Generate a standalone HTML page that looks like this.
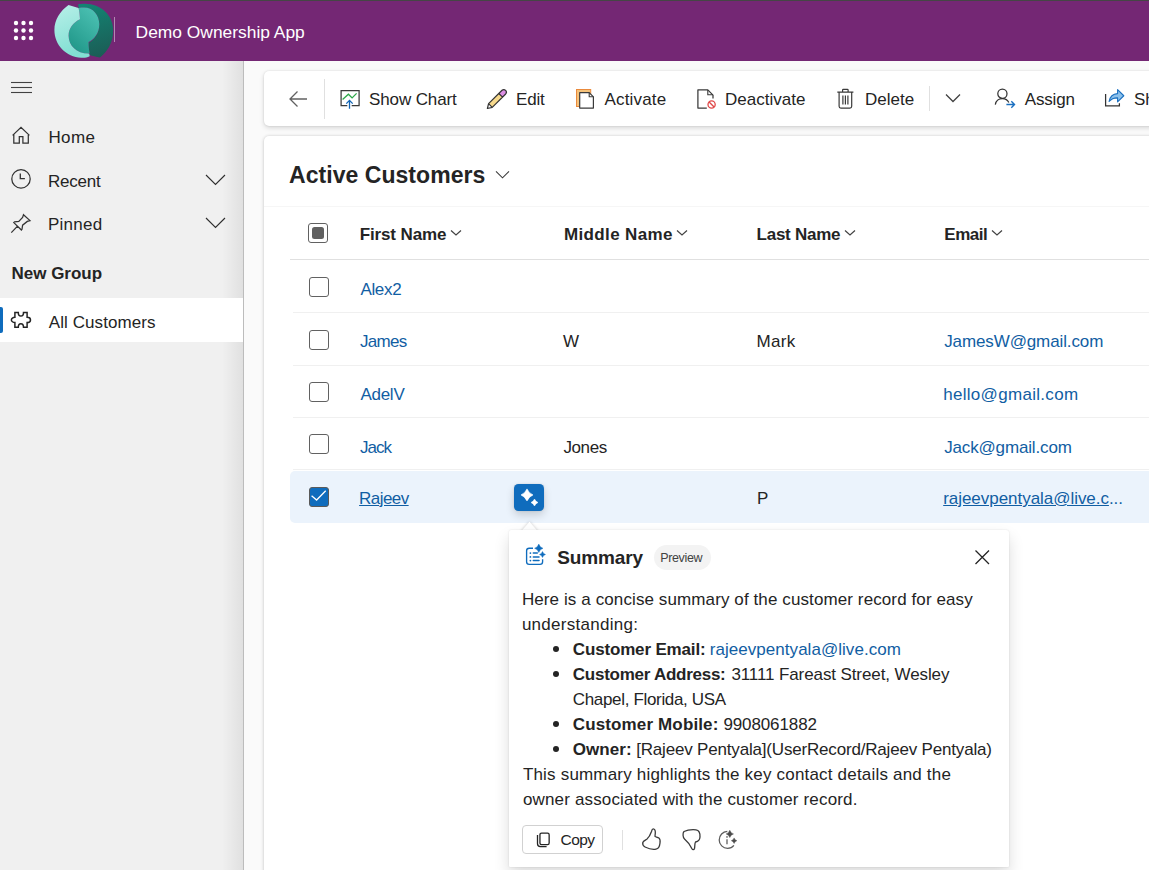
<!DOCTYPE html>
<html><head><meta charset="utf-8">
<style>
*{margin:0;padding:0;box-sizing:border-box}
html,body{width:1149px;height:870px;overflow:hidden;background:#fafafa;font-family:"Liberation Sans",sans-serif;color:#242424}
.a{position:absolute}
.t{position:absolute;white-space:nowrap;font-size:17px;line-height:20px}
.b{font-weight:bold}
.lk{color:#115ea3}
svg{position:absolute;overflow:visible}
#topline{left:0;top:0;width:1149px;height:1px;background:#454545}
#hdr{left:0;top:1px;width:1149px;height:60px;background:#742774}
#side{left:0;top:61px;width:244px;height:809px;background:#f0f0f0;border-right:1px solid #bcbcbc}
#sideshade{left:222px;top:61px;width:21px;height:809px;background:linear-gradient(to right,rgba(0,0,0,0),rgba(0,0,0,0.065))}
#cmd{left:264px;top:71px;width:1000px;height:55px;background:#fff;border-radius:5px;box-shadow:0 0 2px rgba(0,0,0,0.12),0 2px 5px rgba(0,0,0,0.14)}
#grid{left:264px;top:136px;width:1000px;height:800px;background:#fff;border-radius:5px;box-shadow:0 0 3px rgba(0,0,0,0.13),0 1px 4px rgba(0,0,0,0.12)}
.cb{position:absolute;width:20px;height:20px;border:1.5px solid #616161;border-radius:3px;background:#fff}
.hl{position:absolute;height:1px;background:#f0f0f0}
#pop{left:509px;top:530px;width:500px;height:337px;background:#fff;border-radius:2px 3px 1px 1px;box-shadow:0 0 2px rgba(0,0,0,0.12),0 8px 16px rgba(0,0,0,0.14)}
</style></head><body>
<div class="a" id="topline"></div>
<div class="a" id="hdr"></div>
<!-- waffle -->
<svg style="left:0;top:0" width="60" height="60">
<g fill="#fff">
<circle cx="16" cy="23" r="2.2"/><circle cx="23.5" cy="23" r="2.2"/><circle cx="31" cy="23" r="2.2"/>
<circle cx="16" cy="30.5" r="2.2"/><circle cx="23.5" cy="30.5" r="2.2"/><circle cx="31" cy="30.5" r="2.2"/>
<circle cx="16" cy="38" r="2.2"/><circle cx="23.5" cy="38" r="2.2"/><circle cx="31" cy="38" r="2.2"/>
</g></svg>
<!-- logo -->
<svg style="left:54px;top:3px" width="60" height="56" viewBox="0 0 60 56">
<defs>
<linearGradient id="lg1" x1="0" y1="0" x2="0.3" y2="1"><stop offset="0" stop-color="#b8f0e9"/><stop offset="1" stop-color="#82dfd3"/></linearGradient>
<linearGradient id="lg2" x1="0.8" y1="0" x2="0.2" y2="1"><stop offset="0" stop-color="#4cc1b3"/><stop offset="1" stop-color="#1f9688"/></linearGradient>
<linearGradient id="lg3" x1="0.3" y1="0" x2="0.5" y2="1"><stop offset="0" stop-color="#138473"/><stop offset="1" stop-color="#1b5d56"/></linearGradient>
</defs>
<path d="M24.2 1.3 C26 1 28 0.8 31 0.8 C47 0.8 59.2 12.5 59.2 27.5 C59.2 40 53 49 46 54.5 C42 53.8 38 52.8 36 52 C35 48 34.6 43 34.6 39.9 C40 37.5 45.3 30.5 45.3 21.3 C45.3 12 39 4.5 30 4.5 C28 4.5 26 4.6 24.5 4.9 Z" fill="url(#lg3)"/>
<path d="M24.5 4.9 C26 4.6 28 4.5 30 4.5 C39 4.5 45.3 12 45.3 21.3 C45.3 30 40 37 34.6 39 C34.5 43 35 47 35.6 50.6 L34.6 50.6 C22.5 50.5 14.6 42.5 14.6 32.7 C14.6 25.5 19 19.5 26 16.2 C25.7 12 25.5 8 24.5 4.9 Z" fill="url(#lg2)"/>
<path d="M14.5 2 L24.5 4.9 C25.5 8 25.7 12 26 16.2 C19 19.5 14.6 25.5 14.6 32.7 C14.6 42.5 22.5 50.5 34.6 50.6 C35.3 51 35.8 52 35.6 53.3 C33 54.8 30 54.8 27.3 54.7 C12 54 0.4 42 0.4 27 C0.4 17 6 8 14.5 2 Z" fill="url(#lg1)"/>
</svg>
<div class="a" style="left:114px;top:17px;width:1px;height:25px;background:rgba(255,255,255,0.45)"></div>
<div class="t" style="left:135.6px;top:22px;color:#fff;font-size:17.4px;letter-spacing:0px">Demo Ownership App</div>

<!-- sidebar -->
<div class="a" id="side"></div>
<div class="a" id="sideshade"></div>
<svg style="left:11px;top:81px" width="22" height="13"><g stroke="#424242" stroke-width="1.1"><line x1="0" y1="1.5" x2="21" y2="1.5"/><line x1="0" y1="6.5" x2="21" y2="6.5"/><line x1="0" y1="11.5" x2="21" y2="11.5"/></g></svg>
<!-- home -->
<svg style="left:12px;top:126px" width="19" height="19" viewBox="0 0 19 19"><path d="M0.6 9.4 L9 1.4 L17.4 9.4 M1.8 8.2 V17 H7.3 V10.6 H10.9 V17 H16.3 V8.2" fill="none" stroke="#333" stroke-width="1.25" stroke-linejoin="miter"/></svg>
<div class="t" style="left:48.4px;top:128px;letter-spacing:0.4px">Home</div>
<!-- clock -->
<svg style="left:11px;top:169px" width="21" height="21" viewBox="0 0 21 21"><circle cx="10" cy="9.9" r="9.2" fill="none" stroke="#333" stroke-width="1.25"/><path d="M9.3 4.4 V9.6 H13.9" fill="none" stroke="#333" stroke-width="1.3"/></svg>
<div class="t" style="left:48px;top:172px;letter-spacing:-0.248px">Recent</div>
<svg style="left:205px;top:174px" width="22" height="12"><path d="M1 1 L10.5 10.5 L20 1" fill="none" stroke="#2e2e2e" stroke-width="1.15"/></svg>
<!-- pin -->
<svg style="left:10px;top:214px" width="21" height="20" viewBox="0 0 21 20"><path d="M13.5 0.7 L20 6.6 L17.3 7.4 L12.6 11.2 L12 15.3 L11.4 16 L3.8 8.6 L4.6 7.9 L8.8 7.4 L12.6 3.4 Z M7.3 12.4 L1.3 18.6" fill="none" stroke="#333" stroke-width="1.25" stroke-linejoin="miter"/></svg>
<div class="t" style="left:48px;top:215px;letter-spacing:0.244px">Pinned</div>
<svg style="left:205px;top:217px" width="22" height="12"><path d="M1 1 L10.5 10.5 L20 1" fill="none" stroke="#2e2e2e" stroke-width="1.15"/></svg>
<div class="t b" style="left:11.5px;top:264px;letter-spacing:-0.011px">New Group</div>
<div class="a" style="left:0;top:298px;width:243px;height:44px;background:#fff"></div>
<div class="a" style="left:0;top:307px;width:3px;height:26px;background:#0f6cbd;border-radius:0 2px 2px 0"></div>
<!-- puzzle -->
<svg style="left:10px;top:311px" width="22" height="18" viewBox="0 0 22 18"><path d="M4.9 1.5 H8.3 C8.3 3.5 9.4 5.1 10.9 5.1 C12.4 5.1 13.5 3.5 13.5 1.5 H17.1 V6.3 C19 6.3 20.5 7.4 20.5 8.9 C20.5 10.4 19 11.5 17.1 11.5 V16.3 H13.5 C13.5 14.3 12.4 12.7 10.9 12.7 C9.4 12.7 8.3 14.3 8.3 16.3 H4.9 V11.5 C3 11.5 1.4 10.4 1.4 8.9 C1.4 7.4 3 6.3 4.9 6.3 Z" fill="none" stroke="#242424" stroke-width="1.5" stroke-linejoin="miter"/></svg>
<div class="t" style="left:48.8px;top:313px;letter-spacing:0.075px">All Customers</div>

<!-- command bar -->
<div class="a" id="cmd"></div>
<svg style="left:289px;top:90px" width="19" height="18" viewBox="0 0 19 18"><path d="M8.5 1.5 L1 9 L8.5 16.5 M1 9 H18" fill="none" stroke="#616161" stroke-width="1.3"/></svg>
<div class="a" style="left:324px;top:79px;width:1px;height:40px;background:#e0e0e0"></div>
<!-- show chart -->
<svg style="left:340px;top:89px" width="21" height="21" viewBox="0 0 21 21"><path d="M7.3 16.6 H1.1 V1.6 H19.1 V16.6 H11.7" fill="none" stroke="#3a3a3a" stroke-width="1.25"/><path d="M2.6 10.5 L8.4 5.2 L12.1 8.9 L16.6 4.4" fill="none" stroke="#2ea84a" stroke-width="1.3"/><path d="M9.5 19.7 V11.8 M6.3 14.6 L9.5 11.4 L12.7 14.6" fill="none" stroke="#1164b4" stroke-width="1.3"/></svg>
<div class="t" style="left:369px;top:90px;letter-spacing:-0.122px">Show Chart</div>
<!-- edit -->
<svg style="left:487px;top:89px" width="21" height="21" viewBox="0 0 21 21"><path d="M1.57 14.66 L11.84 4.46 L15.5 8.14 L5.23 18.34 Z" fill="#f7d98c"/><path d="M11.84 4.46 L15.03 1.29 A2.6 2.6 0 0 1 18.69 4.97 L15.5 8.14 Z" fill="#dc8ee3"/><path d="M0.4 19.5 L1.57 14.66 L15.03 1.29 A2.6 2.6 0 0 1 18.69 4.97 L5.23 18.34 Z M1.57 14.66 L5.23 18.34 M11.84 4.46 L15.5 8.14" fill="none" stroke="#333" stroke-width="1.2" stroke-linejoin="round"/></svg>
<div class="t" style="left:516px;top:90px;letter-spacing:-0.19px">Edit</div>
<!-- activate -->
<svg style="left:576px;top:89px" width="19" height="21" viewBox="0 0 19 21"><rect x="0.5" y="0.5" width="14.2" height="17" fill="#f5c27a" stroke="#ea8a3c" stroke-width="1"/><path d="M3.7 3.6 H13.2 L17.4 7.8 V19.1 H3.7 Z" fill="#fff" stroke="#3a3a3a" stroke-width="1.2" stroke-linejoin="round"/><path d="M13.2 3.6 V7.8 H17.4" fill="none" stroke="#3a3a3a" stroke-width="1.1"/></svg>
<div class="t" style="left:604.6px;top:90px;letter-spacing:0.155px">Activate</div>
<!-- deactivate -->
<svg style="left:697px;top:89px" width="20" height="21" viewBox="0 0 20 21"><path d="M9.8 19.1 H0.9 V0.9 H10.8 L16 6.1 V9.6" fill="none" stroke="#3a3a3a" stroke-width="1.25" stroke-linejoin="round"/><path d="M10.8 0.9 V5.8 H16" fill="none" stroke="#3a3a3a" stroke-width="1.1"/><circle cx="14.6" cy="15.5" r="3.6" fill="#fff" stroke="#e04848" stroke-width="1.3"/><path d="M12.1 13 L17.1 18" stroke="#e04848" stroke-width="1.3"/></svg>
<div class="t" style="left:725px;top:90px;letter-spacing:0.015px">Deactivate</div>
<!-- delete -->
<svg style="left:837px;top:88px" width="18" height="22" viewBox="0 0 18 22"><path d="M0.3 4.2 H16.4 M5.6 4.2 V1.9 C5.6 1.5 5.9 1.3 6.3 1.3 H10.4 C10.8 1.3 11.1 1.5 11.1 1.9 V4.2 M2.1 4.2 V18.3 C2.1 19.4 2.8 20.1 3.9 20.1 H12.9 C14 20.1 14.7 19.4 14.7 18.3 V4.2 M5.9 7.4 V16.6 M8.4 7.4 V16.6 M10.9 7.4 V16.6" fill="none" stroke="#3a3a3a" stroke-width="1.2"/></svg>
<div class="t" style="left:865px;top:90px;letter-spacing:0.023px">Delete</div>
<div class="a" style="left:929px;top:86px;width:1px;height:25px;background:#e0e0e0"></div>
<svg style="left:945px;top:93px" width="16" height="11"><path d="M1 1.5 L8 8.5 L15 1.5" fill="none" stroke="#424242" stroke-width="1.3"/></svg>
<!-- assign -->
<svg style="left:994px;top:88px" width="22" height="22" viewBox="0 0 22 22"><circle cx="8.4" cy="5.7" r="4.6" fill="none" stroke="#333" stroke-width="1.25"/><path d="M1.3 16.6 C2 12.8 4.5 10.6 8.4 10.6 C11.4 10.6 13.6 11.8 14.8 14.6" fill="none" stroke="#333" stroke-width="1.25"/><path d="M12.4 16.5 H20.4 M17.3 13.3 L20.5 16.5 L17.3 19.7" fill="none" stroke="#1a6fc0" stroke-width="1.4"/></svg>
<div class="t" style="left:1024.7px;top:90px;letter-spacing:-0.134px">Assign</div>
<!-- share -->
<svg style="left:1104px;top:88px" width="22" height="20" viewBox="0 0 22 20"><path d="M1.6 6.1 V17.9 H15.4 V15.2" fill="none" stroke="#333" stroke-width="1.25"/><path d="M5.1 13.5 C6 8.5 9.5 5.8 13.6 5.6 V1.6 L19.8 7.75 L13.6 13.8 V9.9 C10 9.8 7.2 11 5.1 13.5 Z" fill="#8cc0ea" stroke="#1a6fc0" stroke-width="1.1" stroke-linejoin="round"/></svg>
<div class="t" style="left:1134px;top:90px">Share</div>

<!-- grid card -->
<div class="a" id="grid"></div>
<div class="t b" style="left:289px;top:161px;font-size:23px;line-height:28px;letter-spacing:0.048px">Active Customers</div>
<svg style="left:495px;top:170px" width="16" height="10"><path d="M1 1.3 L7.5 7.8 L14 1.3" fill="none" stroke="#3a3a3a" stroke-width="1.05"/></svg>
<div class="hl" style="left:264px;top:206px;width:885px;background:#f6f6f6"></div>
<div class="cb" style="left:308px;top:223px"><div class="a" style="left:2.5px;top:2.5px;width:12px;height:12px;background:#616161;border-radius:2.5px"></div></div>
<div class="t b" style="left:359.7px;top:225px;letter-spacing:-0.123px">First Name</div>
<div class="t b" style="left:564px;top:225px;letter-spacing:0.36px">Middle Name</div>
<div class="t b" style="left:756.6px;top:225px;letter-spacing:-0.266px">Last Name</div>
<div class="t b" style="left:944.3px;top:225px;letter-spacing:-0.483px">Email</div>
<svg style="left:450px;top:229px" width="12" height="8"><path d="M1 1.5 L6 6 L11 1.5" fill="none" stroke="#424242" stroke-width="1.2"/></svg>
<svg style="left:676px;top:229px" width="12" height="8"><path d="M1 1.5 L6 6 L11 1.5" fill="none" stroke="#424242" stroke-width="1.2"/></svg>
<svg style="left:844px;top:229px" width="12" height="8"><path d="M1 1.5 L6 6 L11 1.5" fill="none" stroke="#424242" stroke-width="1.2"/></svg>
<svg style="left:991px;top:229px" width="12" height="8"><path d="M1 1.5 L6 6 L11 1.5" fill="none" stroke="#424242" stroke-width="1.2"/></svg>
<div class="hl" style="left:290px;top:259px;width:859px;background:#e0e0e0"></div>
<div class="hl" style="left:293px;top:312px;width:856px"></div>
<div class="hl" style="left:293px;top:365px;width:856px"></div>
<div class="hl" style="left:293px;top:417px;width:856px"></div>
<div class="hl" style="left:293px;top:469px;width:856px"></div>
<div class="a" style="left:290px;top:471px;width:900px;height:52px;background:#ebf3fc;border-radius:5px"></div>

<div class="cb" style="left:309px;top:277px"></div>
<div class="cb" style="left:309px;top:330px"></div>
<div class="cb" style="left:309px;top:382px"></div>
<div class="cb" style="left:309px;top:434px"></div>
<div class="cb" style="left:309px;top:487px;background:#0f6cbd;border-color:#5a5a5a"><svg style="left:0;top:0" width="17" height="17"><path d="M1.6 7.8 L6.6 12 L15.7 2.8" fill="none" stroke="#fff" stroke-width="1.3"/></svg></div>

<div class="t lk" style="left:360.4px;top:280px;letter-spacing:-0.318px">Alex2</div>
<div class="t lk" style="left:360px;top:332px;letter-spacing:-0.7px">James</div>
<div class="t" style="left:563px;top:332px">W</div>
<div class="t" style="left:756.4px;top:332px;letter-spacing:0.341px">Mark</div>
<div class="t lk" style="left:944.2px;top:332px;letter-spacing:-0.112px">JamesW@gmail.com</div>
<div class="t lk" style="left:360.4px;top:385px;letter-spacing:-0.256px">AdelV</div>
<div class="t lk" style="left:943.2px;top:385px;letter-spacing:0.302px">hello@gmail.com</div>
<div class="t lk" style="left:360.1px;top:438px;letter-spacing:-1.0px">Jack</div>
<div class="t" style="left:563.4px;top:438px;letter-spacing:-0.391px">Jones</div>
<div class="t lk" style="left:944.2px;top:438px;letter-spacing:-0.155px">Jack@gmail.com</div>
<div class="t lk" style="left:359.1px;top:489px;text-decoration:underline;letter-spacing:-0.563px">Rajeev</div>
<div class="t" style="left:757px;top:489px">P</div>
<div class="t lk" style="left:943.2px;top:489px;letter-spacing:-0.04px"><u>rajeevpentyala@live.c</u>...</div>
<!-- sparkle button -->
<div class="a" style="left:514px;top:484px;width:30px;height:27px;background:#0f6cbd;border-radius:4.5px;box-shadow:0 0 2px rgba(0,0,0,0.12),0 4px 8px rgba(0,0,0,0.16)"></div>
<svg style="left:514px;top:484px" width="30" height="27" viewBox="0 0 30 27"><path d="M13 4.9 Q14.8 9.1 19 10.9 Q14.8 12.7 13 16.9 Q11.2 12.7 7 10.9 Q11.2 9.1 13 4.9Z" fill="#fff" stroke="#fff" stroke-width="0.6" stroke-linejoin="round"/><path d="M20.5 15 Q21.55 17.45 24 18.5 Q21.55 19.55 20.5 22 Q19.45 19.55 17 18.5 Q19.45 17.45 20.5 15Z" fill="#fff" stroke="#fff" stroke-width="0.5" stroke-linejoin="round"/></svg>
<!-- popup -->
<svg style="left:519px;top:521px;filter:drop-shadow(0 0 1.5px rgba(0,0,0,0.22))" width="22" height="12"><path d="M1.5 11 L10.5 0.7 L19.5 11 Z" fill="#fff"/></svg>
<div class="a" id="pop"></div>
<svg style="left:520px;top:538px" width="32" height="32" viewBox="0 0 32 32"><path d="M13 10.2 H9.2 C7.6 10.2 6.6 11.2 6.6 12.8 V23.8 C6.6 25.4 7.6 26.4 9.2 26.4 H20 C21.6 26.4 22.6 25.4 22.6 23.8 V21.2" fill="none" stroke="#0f6cbd" stroke-width="1.35"/><path d="M13.3 15.1 H17.3 M13.3 18.9 H19 M13.3 22.6 H19" stroke="#0f6cbd" stroke-width="1.5" stroke-linecap="round"/><circle cx="10.4" cy="15.1" r="0.9" fill="#0f6cbd"/><circle cx="10.4" cy="18.9" r="0.9" fill="#0f6cbd"/><circle cx="10.4" cy="22.6" r="0.9" fill="#0f6cbd"/><path d="M18.8 6.1 Q19.81 9.29 23 10.3 Q19.81 11.31 18.8 14.5 Q17.79 11.31 14.6 10.3 Q17.79 9.29 18.8 6.1Z" fill="#0f6cbd" stroke="#0f6cbd" stroke-width="0.4" stroke-linejoin="round"/><path d="M22.5 13.5 Q23.22 15.78 25.5 16.5 Q23.22 17.22 22.5 19.5 Q21.78 17.22 19.5 16.5 Q21.78 15.78 22.5 13.5Z" fill="#0f6cbd" stroke="#0f6cbd" stroke-width="0.4" stroke-linejoin="round"/></svg>
<div class="t b" style="left:557.2px;top:547px;font-size:19px;line-height:22px;letter-spacing:-0.138px">Summary</div>
<div class="a" style="left:654px;top:545px;width:57px;height:25px;background:#f3f3f3;border-radius:13px"></div>
<div class="t" style="left:660.2px;top:551px;font-size:12.5px;line-height:15px;color:#424242;letter-spacing:-0.355px">Preview</div>
<svg style="left:975px;top:550px" width="15" height="15"><path d="M0.5 0.5 L14 14 M14 0.5 L0.5 14" stroke="#242424" stroke-width="1.3"/></svg>

<div class="t" style="left:521.9px;top:590px;letter-spacing:0.104px">Here is a concise summary of the customer record for easy</div>
<div class="t" style="left:521.9px;top:615px;letter-spacing:0.273px">understanding:</div>
<div class="t b" style="left:572.8px;top:640px;letter-spacing:-0.159px">Customer Email:</div>
<div class="t lk" style="left:709.8px;top:640px;letter-spacing:0.04px">rajeevpentyala@live.com</div>
<div class="t b" style="left:572.8px;top:665px;letter-spacing:-0.262px">Customer Address:</div>
<div class="t" style="left:731.4px;top:665px;letter-spacing:-0.103px">31111 Fareast Street, Wesley</div>
<div class="t" style="left:572.8px;top:690px;letter-spacing:-0.334px">Chapel, Florida, USA</div>
<div class="t b" style="left:572.8px;top:715px;letter-spacing:0.133px">Customer Mobile:</div>
<div class="t" style="left:723.4px;top:715px;letter-spacing:-0.11px">9908061882</div>
<div class="t b" style="left:572.8px;top:740px;letter-spacing:0.06px">Owner:</div>
<div class="t" style="left:636.2px;top:740px;letter-spacing:-0.182px">[Rajeev Pentyala](UserRecord/Rajeev Pentyala)</div>
<div class="t" style="left:522.9px;top:765px;letter-spacing:0.191px">This summary highlights the key contact details and the</div>
<div class="t" style="left:522.9px;top:790px;letter-spacing:0.162px">owner associated with the customer record.</div>
<div class="a" style="left:553px;top:646px;width:6px;height:6px;border-radius:3px;background:#242424"></div>
<div class="a" style="left:553px;top:671px;width:6px;height:6px;border-radius:3px;background:#242424"></div>
<div class="a" style="left:553px;top:721px;width:6px;height:6px;border-radius:3px;background:#242424"></div>
<div class="a" style="left:553px;top:746px;width:6px;height:6px;border-radius:3px;background:#242424"></div>

<div class="a" style="left:522px;top:825px;width:81px;height:29px;border:1px solid #d1d1d1;border-radius:4px;background:#fff"></div>
<svg style="left:536px;top:831px" width="15" height="17" viewBox="0 0 15 17"><rect x="3.95" y="2.05" width="9.2" height="11.6" rx="1.6" fill="none" stroke="#242424" stroke-width="1.3"/><path d="M1.5 4 V12.8 C1.5 14.6 2.6 15.6 4.3 15.6 H10.6" fill="none" stroke="#242424" stroke-width="1.3"/></svg>
<div class="t" style="left:560.6px;top:831px;font-size:15.5px;line-height:17px;letter-spacing:-0.6px">Copy</div>
<div class="a" style="left:622px;top:830px;width:1px;height:20px;background:#e0e0e0"></div>
<!-- thumbs up -->
<svg style="left:642px;top:828px" width="19" height="23" viewBox="0 0 19 23"><path d="M11.2 0.8 C12.7 0.8 13.5 2.6 13.3 5.2 C13.2 6.6 12.9 7.6 13.1 8.5 C14 9 15.8 9.2 16.9 10 C18.2 11 18.3 13 18 15 C17.7 18 16.5 20.8 14 21.2 C11 21.8 6 20.5 3 19 C1 18 0.5 16 0.8 14.5 C1.2 13 3 12.3 4.8 11.2 C6.8 9.5 8.5 6.5 9.5 3.5 C9.9 1.8 10.4 0.8 11.2 0.8 Z" fill="none" stroke="#3a3a3a" stroke-width="1.3" stroke-linejoin="round"/></svg>
<!-- thumbs down -->
<svg style="left:682px;top:829px" width="19" height="23" viewBox="0 0 19 23"><path d="M2 2.5 C5 1 10 0.5 14 0.8 C17 1.2 18.2 4 18 8 C17.8 11 16 12.5 13.5 13 C12.5 14.5 13 17.5 12.5 19.5 C12 21 10.5 21 9.8 19.5 C8.5 16.5 6 13 2.5 10 C0.8 8.5 0.5 4 2 2.5 Z" fill="none" stroke="#3a3a3a" stroke-width="1.3" stroke-linejoin="round"/></svg>
<!-- regenerate -->
<svg style="left:718px;top:829px" width="21" height="21" viewBox="0 0 21 21"><path d="M9.3 2.3 C4.8 2.6 1.2 6.3 1.2 10.9 C1.2 15.6 5 19.3 9.6 19.3 C12.2 19.3 14.4 18.2 15.9 16.3" fill="none" stroke="#5c5c5c" stroke-width="1.25"/><path d="M9 10.3 V15.3" stroke="#6a6a6a" stroke-width="1.4"/><circle cx="9" cy="7.9" r="0.85" fill="#6a6a6a"/><path d="M11.8 1.2 Q12.69 4.01 15.5 4.9 Q12.69 5.79 11.8 8.6 Q10.91 5.79 8.1 4.9 Q10.91 4.01 11.8 1.2Z" fill="#4a4a4a" stroke="#4a4a4a" stroke-width="0.4" stroke-linejoin="round"/><path d="M16.1 8.9 Q16.77 11.03 18.9 11.7 Q16.77 12.37 16.1 14.5 Q15.43 12.37 13.3 11.7 Q15.43 11.03 16.1 8.9Z" fill="#4a4a4a" stroke="#4a4a4a" stroke-width="0.4" stroke-linejoin="round"/></svg>
</body></html>
